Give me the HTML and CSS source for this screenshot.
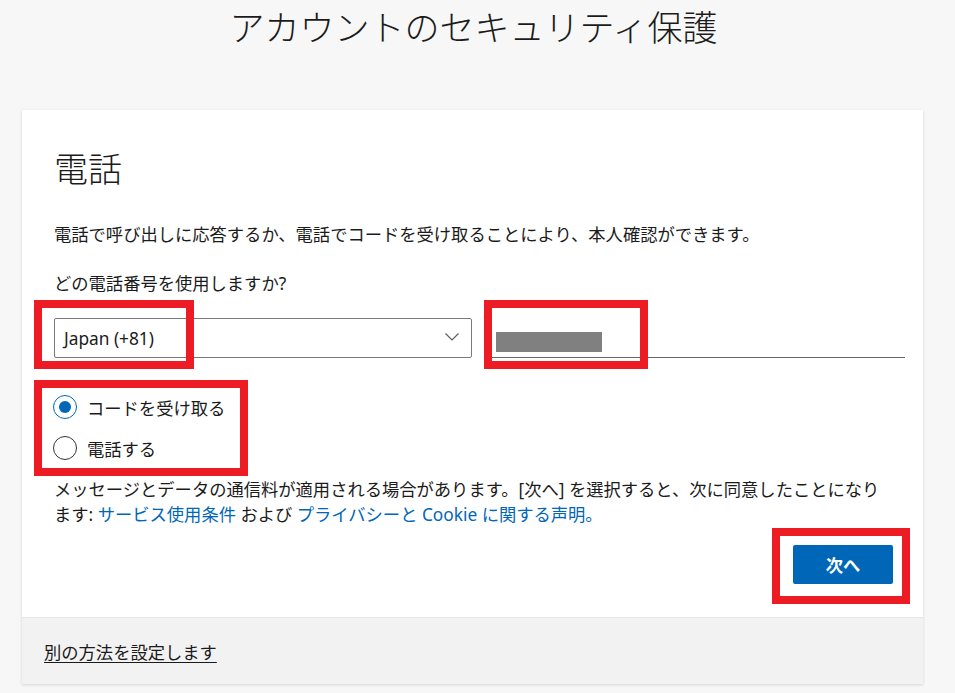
FILE: index.html
```html
<!DOCTYPE html>
<html lang="ja">
<head>
<meta charset="utf-8">
<title>アカウントのセキュリティ保護</title>
<link rel="stylesheet" href="styles.css">
</head>
<body>
<div class="page">
  <h1 class="title">アカウントのセキュリティ保護</h1>
  <div class="card">
    <div class="card-body">
      <h2 class="heading">電話</h2>
      <p class="desc">電話で呼び出しに応答するか、電話でコードを受け取ることにより、本人確認ができます。</p>
      <p class="question">どの電話番号を使用しますか?</p>
      <div class="phone-row">
        <div class="select">
          <span class="select-value">Japan (+81)</span>
          <svg class="chev" width="14" height="8" viewBox="0 0 14 8"><polyline points="0.5,0.5 7,7 13.5,0.5" fill="none" stroke="#605e5c" stroke-width="1.2"/></svg>
        </div>
        <div class="phone-input"><span class="redact"></span></div>
      </div>
      <div class="radios">
        <label class="radio-row"><span class="radio radio-checked"></span><span>コードを受け取る</span></label>
        <label class="radio-row"><span class="radio"></span><span>電話する</span></label>
      </div>
      <p class="terms"><span>メッセージとデータの通信料が適用される場合があります。[次へ] を選択すると、次に同意したことになり</span><br><span>ます: </span><a class="link" href="#">サービス使用条件</a><span> および </span><a class="link" href="#">プライバシーと Cookie に関する声明。</a></p>
      <div class="actions"><button class="btn-primary" type="button">次へ</button></div>
    </div>
    <div class="card-footer"><a class="alt-link" href="#">別の方法を設定します</a></div>
  </div>
  <div class="mark mark-country"></div>
  <div class="mark mark-number"></div>
  <div class="mark mark-radios"></div>
  <div class="mark mark-next"></div>
</div>
</body>
</html>
```
FILE: styles.css
```css
* { box-sizing: border-box; }
html, body { margin: 0; padding: 0; }
body {
  background: #f7f7f7;
  color: #1b1b1b;
  font-family: "Noto Sans", "Noto Sans CJK JP", sans-serif;
  font-size: 17.3px;
}
.page {
  position: relative;
  width: 955px;
  height: 693px;
  padding-top: 7px;
  overflow: hidden;
}
.title {
  margin: 0;
  padding-right: 8px;
  text-align: center;
  font-size: 35px;
  line-height: 42px;
  font-weight: 300;
  color: #1b1b1b;
}
.card {
  margin: 61px 0 0 22px;
  width: 901px;
  background: #fff;
  box-shadow: 0 1px 3px rgba(0,0,0,0.14);
}
.card-body {
  padding: 39px 18px 33px 32px;
}
.heading {
  margin: 0;
  font-size: 34px;
  line-height: 40px;
  font-weight: 300;
}
.desc {
  margin: 33px 0 0;
  line-height: 25px;
}
.question {
  margin: 24px 0 0;
  line-height: 25px;
}
.phone-row {
  display: flex;
  gap: 18px;
  margin-top: 22px;
}
.select {
  width: 418px;
  height: 40px;
  border: 1px solid #7a7a7a;
  border-radius: 2px;
  display: flex;
  align-items: center;
  justify-content: space-between;
  padding: 0 12px 0 9px;
}
.select-value { line-height: 25px; }
.chev { display: block; margin-top: -2px; }
.phone-input {
  flex: 1;
  height: 40px;
  border-bottom: 1px solid #666;
  display: flex;
  align-items: flex-end;
  padding: 0 0 5px 6px;
}
.redact {
  display: block;
  width: 106px;
  height: 20px;
  background: #808080;
}
.radios {
  margin-top: 34px;
  display: flex;
  flex-direction: column;
  gap: 11px;
}
.radio-row {
  display: flex;
  align-items: center;
  height: 30px;
  gap: 10px;
  margin-left: -1px;
}
.radio {
  width: 24px;
  height: 24px;
  border-radius: 50%;
  border: 1px solid #333;
  display: flex;
  align-items: center;
  justify-content: center;
}
.radio-checked { border-color: #0067b8; }
.radio-checked::after {
  content: "";
  width: 12px;
  height: 12px;
  border-radius: 50%;
  background: #0067b8;
}
.terms {
  margin: 14px 0 0;
  line-height: 25px;
}
.link { color: #0067b8; text-decoration: none; }
.actions {
  margin-top: 18px;
  display: flex;
  justify-content: flex-end;
  padding-right: 12px;
}
.btn-primary {
  width: 100px;
  height: 39px;
  border: 0;
  border-radius: 2px;
  background: #0067b8;
  color: #fff;
  font-family: inherit;
  font-size: 17.3px;
  font-weight: 700;
}
.card-footer {
  height: 67px;
  background: #f2f2f2;
  border-top: 1px solid #e6e6e6;
  padding: 22px 0 0 22px;
  line-height: 25px;
}
.alt-link {
  color: #1b1b1b;
  text-decoration: underline;
  text-underline-offset: 3px;
}
.mark {
  position: absolute;
  border: 8px solid #ed1c24;
}
.mark-country { left: 34px; top: 300px; width: 160px; height: 69px; }
.mark-number { left: 484px; top: 300px; width: 164px; height: 69px; }
.mark-radios { left: 34px; top: 380px; width: 214px; height: 96px; }
.mark-next { left: 772px; top: 528px; width: 138px; height: 76px; }
```
